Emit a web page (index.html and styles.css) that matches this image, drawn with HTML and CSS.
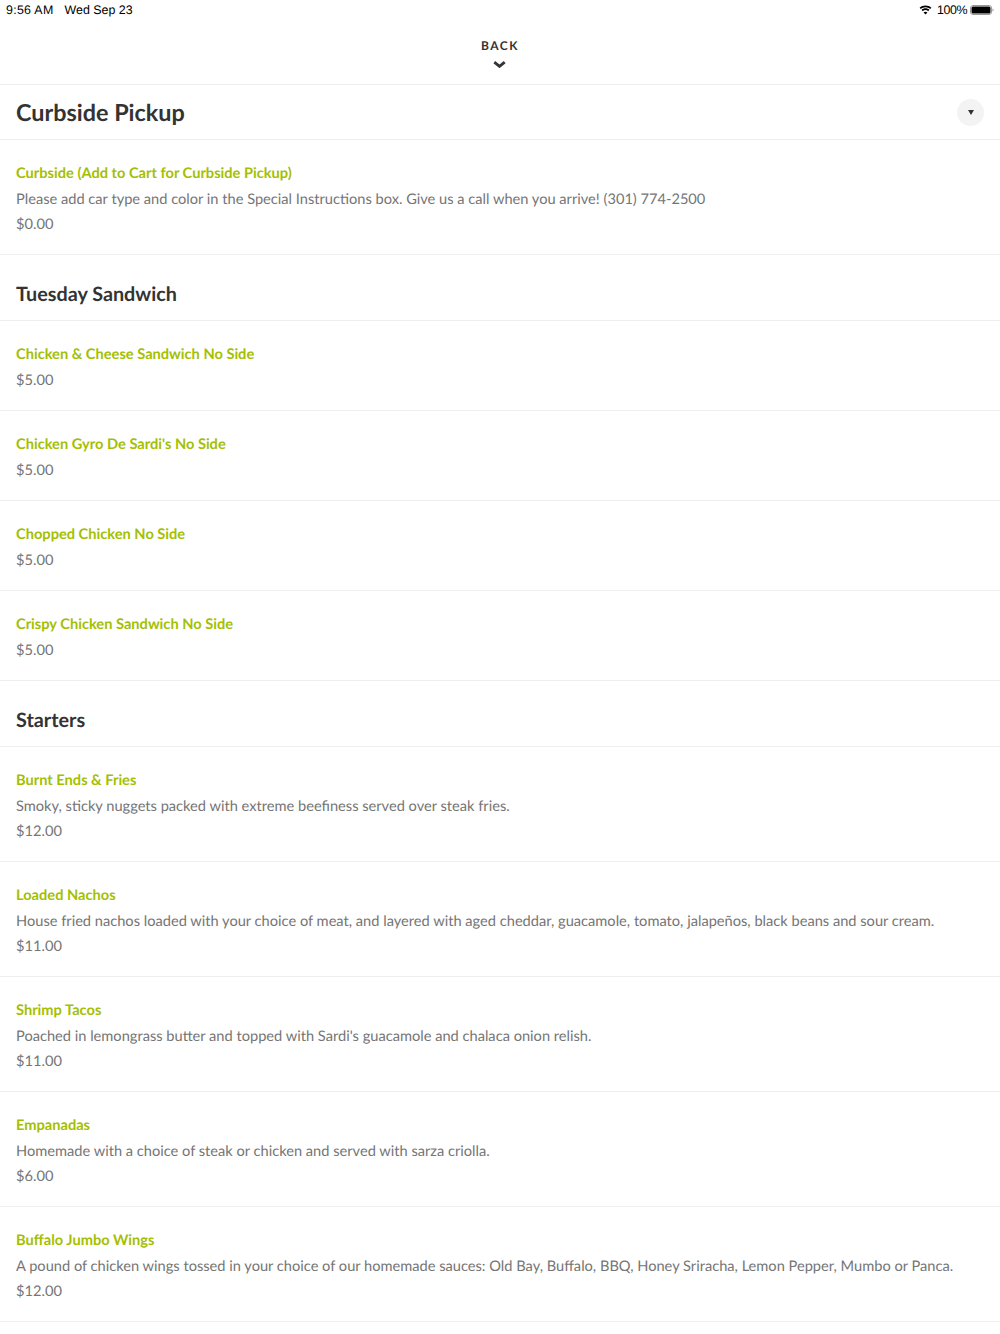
FILE: index.html
```html
<!DOCTYPE html>
<html lang="en">
<head>
<meta charset="utf-8">
<title>Menu</title>
<link rel="stylesheet" href="styles.css">
</head>
<body>
<div class="status">
  <div class="status-left"><span class="time">9:56 AM</span><span>Wed Sep 23</span></div>
  <div class="status-right">
    <svg class="wifi" width="13" height="10" viewBox="0 0 15 11"><path d="M7.500 2.200c2.100 0 4 .8 5.400 2.200l1.400-1.500C12.500 1.200 10.100.2 7.500.2S2.500 1.200.7 2.900l1.400 1.500C3.500 3 5.400 2.200 7.500 2.200z"/><path d="M7.500 5.600c1.200 0 2.300.5 3.100 1.200l1.400-1.500C10.800 4.200 9.200 3.600 7.500 3.600S4.200 4.200 3 5.300l1.400 1.500c.8-.7 1.900-1.200 3.100-1.200z"/><path d="M7.500 10.800l2.200-2.400C9.100 7.800 8.300 7.400 7.500 7.400s-1.600.4-2.200 1z"/></svg>
    <span class="percent">100%</span>
    <svg class="battery" width="24" height="10" viewBox="0 0 24 10"><rect x=".5" y=".5" width="21" height="9" rx="2.500" fill="none" stroke="#999"/><rect x="1.500" y="1.500" width="19" height="7" rx="1.500" fill="#000"/><path d="M22.500 3.500v3c.7-.2 1.100-.8 1.100-1.500s-.4-1.300-1.100-1.500z" fill="#999"/></svg>
  </div>
</div>
<div class="back">
  <div class="back-label">BACK</div>
  <svg class="back-chevron" width="13" height="7" viewBox="0 0 13 7"><path d="M1.300 1.200L6.500 5.400l5.200-4.200" fill="none" stroke="#333" stroke-width="2.800"/></svg>
</div>
<main>
  <header class="category">
    <h1>Curbside Pickup</h1>
    <div class="toggle"><span class="caret"></span></div>
  </header>
  <article class="item"><h3>Curbside (Add to Cart for Curbside Pickup)</h3><p>Please add car type and color in the Special Instructions box. Give us a call when you arrive! (301) 774-2500</p><p>$0.00</p></article>
  <h2 class="section">Tuesday Sandwich</h2>
  <article class="item"><h3>Chicken &amp; Cheese Sandwich No Side</h3><p>$5.00</p></article>
  <article class="item"><h3>Chicken Gyro De Sardi's No Side</h3><p>$5.00</p></article>
  <article class="item"><h3>Chopped Chicken No Side</h3><p>$5.00</p></article>
  <article class="item"><h3>Crispy Chicken Sandwich No Side</h3><p>$5.00</p></article>
  <h2 class="section">Starters</h2>
  <article class="item"><h3>Burnt Ends &amp; Fries</h3><p>Smoky, sticky nuggets packed with extreme beefiness served over steak fries.</p><p>$12.00</p></article>
  <article class="item"><h3>Loaded Nachos</h3><p>House fried nachos loaded with your choice of meat, and layered with aged cheddar, guacamole, tomato, jalapeños, black beans and sour cream.</p><p>$11.00</p></article>
  <article class="item"><h3>Shrimp Tacos</h3><p>Poached in lemongrass butter and topped with Sardi's guacamole and chalaca onion relish.</p><p>$11.00</p></article>
  <article class="item"><h3>Empanadas</h3><p>Homemade with a choice of steak or chicken and served with sarza criolla.</p><p>$6.00</p></article>
  <article class="item"><h3>Buffalo Jumbo Wings</h3><p>A pound of chicken wings tossed in your choice of our homemade sauces: Old Bay, Buffalo, BBQ, Honey Sriracha, Lemon Pepper, Mumbo or Panca.</p><p>$12.00</p></article>
</main>
</body>
</html>
```
FILE: styles.css
```css
* { box-sizing: border-box; }
html, body { margin: 0; padding: 0; background: #fff; }
body { font-family: Lato, "Liberation Sans", sans-serif; height: 1334px; overflow: hidden; text-rendering: geometricPrecision; }
.status { height: 20px; display: flex; justify-content: space-between; align-items: center; padding: 0 6px 1px 6px; font-family: "Liberation Sans", Arial, sans-serif; font-size: 12.4px; color: #000; }
.status-left { display: flex; gap: 11px; }
.time { letter-spacing: .3px; }
.status-right { display: flex; align-items: center; }
.wifi { fill: #000; }
.percent { margin: 0 3px 0 5px; letter-spacing: -.4px; }
.back { height: 65px; border-bottom: 1px solid #eee; display: flex; flex-direction: column; align-items: center; padding-top: 19px; }
.back-label { font-size: 12px; line-height: 14px; font-weight: 700; letter-spacing: 1.5px; color: #333; }
.back-chevron { margin-top: 8px; margin-right: 1px; }
.category { height: 55px; border-bottom: 1px solid #eee; display: flex; justify-content: space-between; align-items: center; padding: 0 16px; }
h1 { margin: 0; font-size: 23.4px; font-weight: 700; color: #333; }
.toggle { width: 27px; height: 27px; border-radius: 50%; background: #f3f3f3; display: flex; align-items: center; justify-content: center; }
.caret { width: 0; height: 0; border-left: 3.500px solid transparent; border-right: 3.500px solid transparent; border-top: 5px solid #333; }
.section { margin: 0; height: 66px; display: flex; align-items: center; padding: 13px 16px 0; font-size: 19.8px; font-weight: 700; color: #333; border-bottom: 1px solid #eee; }
.item { padding: 21px 16px 17px; border-bottom: 1px solid #eee; }
.item h3 { margin: 0 0 1px; font-size: 14.63px; line-height: 25px; font-weight: 700; color: #a3c000; }
.item p { margin: 0; font-size: 14.63px; line-height: 25px; color: #757575; }
```
